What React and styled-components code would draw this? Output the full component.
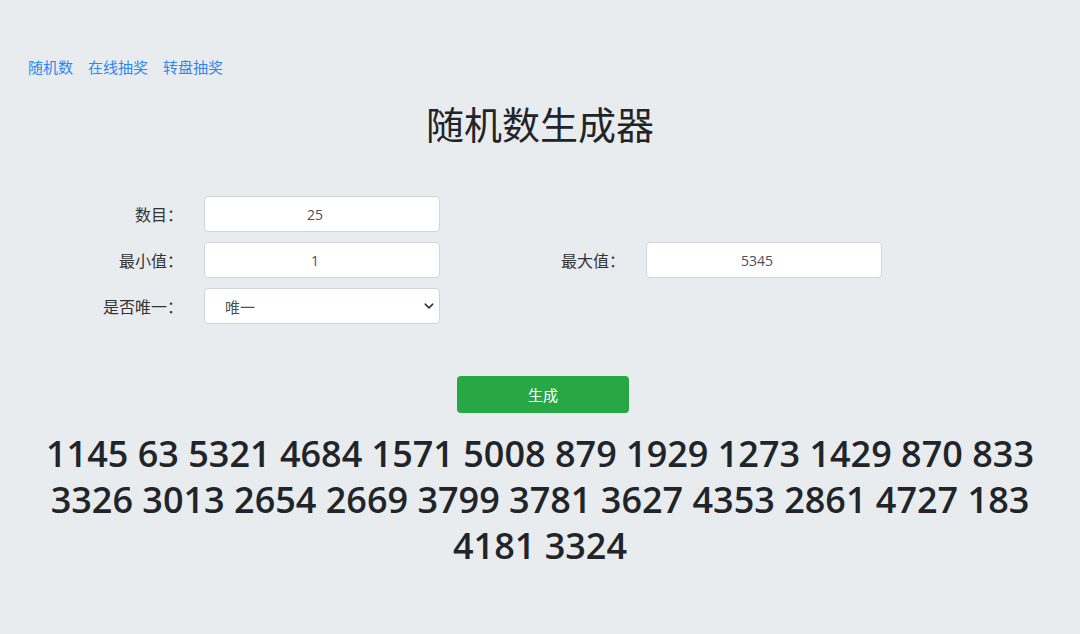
import React, { useState } from 'react';
import styled, { createGlobalStyle } from 'styled-components';

const GlobalStyle = createGlobalStyle`
  body {
    margin: 0;
    background: #e9ecef;
    font-family: "Open Sans", "Noto Sans CJK SC", sans-serif;
    color: #212529;
  }
`;

const Page = styled.div`
  min-height: 634px;
  padding-top: 53px;
  box-sizing: border-box;
`;

const Nav = styled.nav`
  display: flex;
  gap: 15px;
  padding-left: 28px;
  height: 26px;
  align-items: center;
`;

const NavLink = styled.a`
  color: #2f86f0;
  font-size: 15px;
  text-decoration: none;
  font-family: "Noto Sans CJK SC", sans-serif;
`;

const Title = styled.h1`
  margin: 16px 0 0;
  text-align: center;
  font-weight: 400;
  font-size: 38px;
  line-height: 56px;
  font-family: "Noto Sans CJK SC", sans-serif;
`;

const Form = styled.div`
  display: grid;
  grid-template-columns: 180px 236px 182px 236px;
  grid-auto-rows: 36px;
  column-gap: 12px;
  row-gap: 10px;
  padding-left: 12px;
  margin-top: 45px;
`;

const Label = styled.label`
  display: flex;
  align-items: center;
  justify-content: flex-end;
  padding-right: 9px;
  font-size: 16px;
  color: #333;
  font-family: "Noto Sans CJK SC", sans-serif;
`;

const Input = styled.input`
  box-sizing: border-box;
  width: 100%;
  height: 36px;
  border: 1px solid #ced4da;
  border-radius: 4px;
  background: #fff;
  padding: 0 14px 0 0;
  text-align: center;
  font-size: 14px;
  color: #495057;
  font-family: "Open Sans", sans-serif;
  outline: none;
`;

const SelectWrap = styled.div`
  position: relative;
`;

const Select = styled.select`
  box-sizing: border-box;
  width: 100%;
  height: 36px;
  border: 1px solid #ced4da;
  border-radius: 4px;
  background: #fff;
  padding-left: 20px;
  font-size: 15px;
  color: #495057;
  font-family: "Noto Sans CJK SC", sans-serif;
  appearance: none;
  outline: none;
`;

const Chevron = styled.svg`
  position: absolute;
  right: 6px;
  top: 13px;
  pointer-events: none;
`;

const Empty = styled.div``;

const ButtonRow = styled.div`
  display: flex;
  justify-content: center;
  margin-top: 52px;
  padding-left: 6px;
`;

const Button = styled.button`
  width: 172px;
  height: 37px;
  border: none;
  border-radius: 4px;
  background: #28a745;
  color: #fff;
  font-size: 15px;
  font-family: "Noto Sans CJK SC", sans-serif;
`;

const Result = styled.div`
  margin: 18px auto 0;
  width: 1040px;
  text-align: center;
  font-size: 36px;
  font-weight: 600;
  line-height: 46px;
  color: #212529;
`;

const numbers = [
  1145, 63, 5321, 4684, 1571, 5008, 879, 1929, 1273, 1429, 870, 833,
  3326, 3013, 2654, 2669, 3799, 3781, 3627, 4353, 2861, 4727, 183,
  4181, 3324,
];

export default function App() {
  const [count, setCount] = useState('25');
  const [min, setMin] = useState('1');
  const [max, setMax] = useState('5345');

  return (
    <Page>
      <GlobalStyle />
      <Nav>
        <NavLink href="#">随机数</NavLink>
        <NavLink href="#">在线抽奖</NavLink>
        <NavLink href="#">转盘抽奖</NavLink>
      </Nav>
      <Title>随机数生成器</Title>
      <Form>
        <Label>数目：</Label>
        <Input value={count} onChange={(e) => setCount(e.target.value)} />
        <Empty />
        <Empty />
        <Label>最小值：</Label>
        <Input value={min} onChange={(e) => setMin(e.target.value)} />
        <Label>最大值：</Label>
        <Input value={max} onChange={(e) => setMax(e.target.value)} />
        <Label>是否唯一：</Label>
        <SelectWrap>
          <Select defaultValue="1">
            <option value="1">唯一</option>
            <option value="0">不唯一</option>
          </Select>
          <Chevron width="10" height="10" viewBox="0 0 16 16">
            <path d="M2 5l6 6 6-6" fill="none" stroke="#333" strokeWidth="2.4" strokeLinecap="round" strokeLinejoin="round" />
          </Chevron>
        </SelectWrap>
      </Form>
      <ButtonRow>
        <Button>生成</Button>
      </ButtonRow>
      <Result>{numbers.join(' ')}</Result>
    </Page>
  );
}
